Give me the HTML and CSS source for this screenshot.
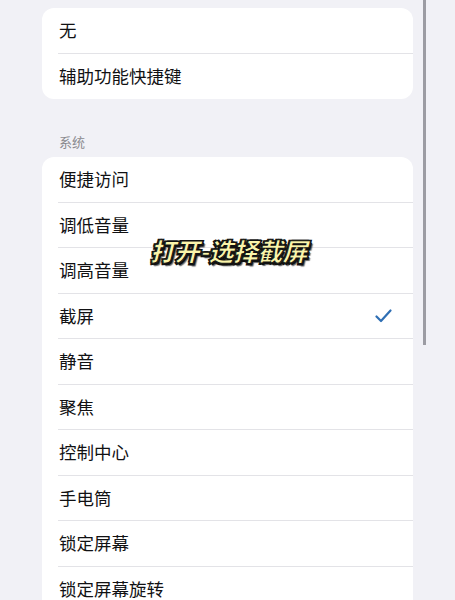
FILE: index.html
```html
<!DOCTYPE html>
<html lang="zh-CN">
<head>
  <meta charset="UTF-8">
  <title>辅助功能快捷键</title>
  <link rel="stylesheet" href="styles.css">
</head>
<body>
  <div class="page">
    <div class="group">
      <div class="row"><span class="label">无</span></div>
      <div class="row"><span class="label">辅助功能快捷键</span></div>
    </div>

    <div class="section-title">系统</div>
    <div class="group">
      <div class="row"><span class="label">便捷访问</span></div>
      <div class="row"><span class="label">调低音量</span></div>
      <div class="row"><span class="label">调高音量</span></div>
      <div class="row">
        <span class="label">截屏</span>
        <svg class="check" width="17" height="14" viewBox="0 0 17 14">
          <polyline points="1.5,7.5 6,12 15.5,1.5" fill="none" stroke="#2f6fb4" stroke-width="2.2" stroke-linecap="round" stroke-linejoin="round"/>
        </svg>
      </div>
      <div class="row"><span class="label">静音</span></div>
      <div class="row"><span class="label">聚焦</span></div>
      <div class="row"><span class="label">控制中心</span></div>
      <div class="row"><span class="label">手电筒</span></div>
      <div class="row"><span class="label">锁定屏幕</span></div>
      <div class="row"><span class="label">锁定屏幕旋转</span></div>
    </div>
  </div>

  <div class="scrollbar"></div>
  <div class="caption">打开-选择截屏</div>
</body>
</html>
```

FILE: styles.css
```css
body {
  margin: 0;
  background: #f1f1f6;
  font-family: "Noto Sans CJK SC", "Noto Sans", sans-serif;
  color: #111113;
  overflow: hidden;
}

.page {
  padding: 8px 42px 0 42px;
}

.group {
  background: #ffffff;
  border-radius: 12px;
  overflow: hidden;
}

.row {
  display: flex;
  align-items: center;
  height: 45.5px;
  margin-left: 16px;
  padding-right: 21px;
  box-sizing: border-box;
  border-bottom: 1px solid #e3e3e7;
}

.row:last-child {
  border-bottom: none;
}

.label {
  flex: 1;
  font-size: 17.5px;
  line-height: 22px;
  padding-left: 1px;
}

.check {
  display: block;
}

.section-title {
  padding: 34px 17px 6px;
  font-size: 13px;
  line-height: 18px;
  color: #8a8a8f;
}

.scrollbar {
  position: absolute;
  left: 423px;
  top: 0;
  width: 3px;
  height: 345px;
  background: #9c9ca3;
}

.caption {
  position: absolute;
  left: 150px;
  top: 234px;
  font-size: 25px;
  line-height: 32px;
  font-weight: 900;
  font-style: italic;
  letter-spacing: -0.4px;
  color: #fbf5aa;
  -webkit-text-stroke: 1px #111;
  text-shadow:
    1.5px 1.5px 0 #111, -1.5px -1.5px 0 #111,
    1.5px -1.5px 0 #111, -1.5px 1.5px 0 #111,
    2.5px 2.5px 1px rgba(0,0,0,0.6);
}
```
